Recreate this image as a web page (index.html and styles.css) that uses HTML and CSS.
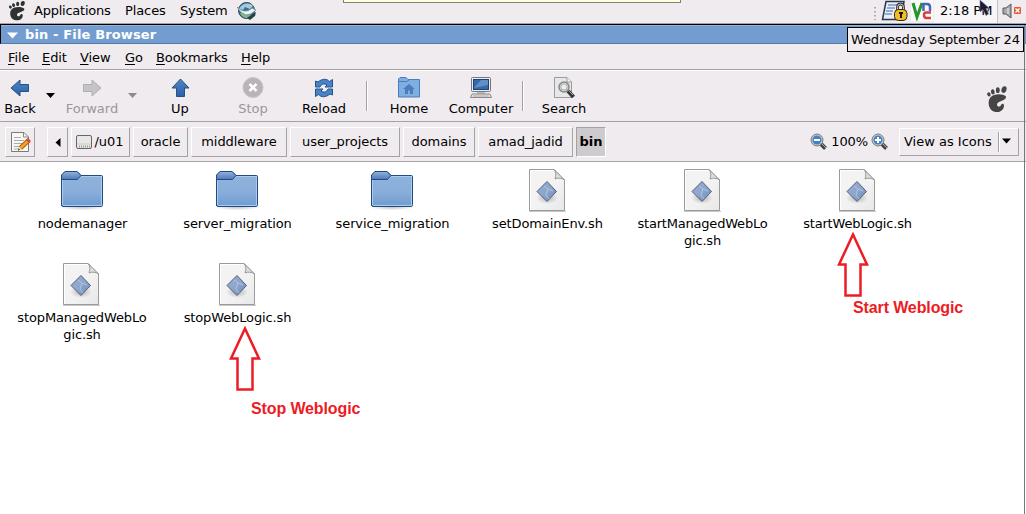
FILE: index.html
```html
<!DOCTYPE html>
<html lang="en">
<head>
<meta charset="utf-8">
<title>bin - File Browser</title>
<link rel="stylesheet" href="styles.css">
</head>
<body>
<svg class="defs" width="0" height="0">
  <defs>
    <linearGradient id="gFolder" x1="0" y1="0" x2="0" y2="1"><stop offset="0" stop-color="#8fb3df"/><stop offset=".55" stop-color="#8bafdb"/><stop offset="1" stop-color="#6d9dd0"/></linearGradient>
    <linearGradient id="gTab" x1="0" y1="0" x2="0" y2="1"><stop offset="0" stop-color="#93b3dd"/><stop offset="1" stop-color="#5078b4"/></linearGradient>
    <linearGradient id="gPage" x1="0" y1="0" x2="1" y2="1"><stop offset="0" stop-color="#f4f4f4"/><stop offset=".6" stop-color="#f3f2f3"/><stop offset="1" stop-color="#e8e7e8"/></linearGradient>
    <linearGradient id="gDiamond" x1="0" y1="0" x2="1" y2="1"><stop offset="0" stop-color="#98acd2"/><stop offset=".5" stop-color="#8fa6cc"/><stop offset="1" stop-color="#6c86b5"/></linearGradient>
    <linearGradient id="gArrow" x1="0" y1="0" x2="0" y2="1"><stop offset="0" stop-color="#5186c5"/><stop offset="1" stop-color="#2861a8"/></linearGradient>
    <radialGradient id="gShadow"><stop offset="0" stop-color="#777" stop-opacity=".5"/><stop offset="1" stop-color="#777" stop-opacity="0"/></radialGradient>
    <symbol id="foot" viewBox="0 0 22 28">
      <ellipse cx="2.9" cy="9.4" rx="1.7" ry="2.1" transform="rotate(-25 2.9 9.4)"/>
      <ellipse cx="6.8" cy="6.8" rx="1.8" ry="2.6" transform="rotate(-12 6.8 6.8)"/>
      <ellipse cx="11.8" cy="5.2" rx="1.9" ry="2.9"/>
      <ellipse cx="18" cy="4.6" rx="2.5" ry="3.4" transform="rotate(18 18 4.6)"/>
      <path d="M20 11.500C17 8.500 8 8 4.300 12.500C1 16.500 2.500 26 9.500 27C14 27.700 18 25 18 20.500C18 18.500 16 18 15 20C14 22.500 11 22 11 19.500C11 15.500 21 16 20 11.500Z"/>
    </symbol>
    <symbol id="folder" viewBox="0 0 46 44">
      <ellipse cx="23" cy="38.500" rx="23" ry="4" fill="url(#gShadow)"/>
      <path d="M2.500 37.500V8L6 3.500H18L22 7.500H42.500Q43.500 7.500 43.500 8.500V36.500Q43.500 38.500 42 38.500H4Q2.500 38.500 2.500 36.500Z" fill="url(#gFolder)" stroke="#204a87"/>
      <path d="M3.500 37V11.500H18L22.500 8.500H42.500V37.500H4" fill="none" stroke="#b0cbea"/>
      <path d="M2.500 11.500V7L6 3.500H18L22 7.500L18.500 11.500Z" fill="url(#gTab)" stroke="#204a87"/>
    </symbol>
    <symbol id="script" viewBox="0 0 38 44">
      <path d="M1 43.300H38" stroke="#bbb"/>
      <path d="M1.500 1.500H26L36.500 12V42.500H1.500Z" fill="url(#gPage)" stroke="#9a9a9a"/>
      <path d="M2.500 41.500V2.500H25" fill="none" stroke="#fff"/>
      <path d="M26 1.500C28 4 28.500 7 27 11C30 9.500 34 10 36.500 12Z" fill="#dedede" stroke="#9a9a9a"/>
      <ellipse cx="19" cy="30" rx="11" ry="6" fill="url(#gShadow)"/>
      <path d="M19 13.500L28.500 23.500L19 33.500L9 23.500Z" fill="url(#gDiamond)" stroke="#51607a"/>
      <path d="M16 18L20 21L18 27L21 31M20 21L25 23" fill="none" stroke="#b0c4e0"/>
    </symbol>
    <symbol id="arrow" viewBox="0 0 20 20"><path d="M1 10L10 2V6.500H18.500V13.500H10V18Z"/></symbol>
    <symbol id="lens" viewBox="0 0 18 18">
      <path d="M11 11L15.500 15.500" stroke="#444" stroke-width="4"/><path d="M12 11L16 15" stroke="#aaa"/>
      <circle cx="7" cy="7" r="6" fill="#c8c9c5" stroke="#7c7d78"/><circle cx="7" cy="7" r="4.500" fill="#4382c9"/>
      <path d="M4 7H10" stroke="#fff" stroke-width="2"/>
    </symbol>
  </defs>
</svg>

<div class="desktop">
  <header class="panel">
    <svg class="panel-foot" width="18" height="21" viewBox="0 0 22 28" preserveAspectRatio="none"><use href="#foot"/></svg>
    <span class="t applications">Applications</span><span class="t places">Places</span><span class="t system">System</span>
    <svg class="globe" width="20" height="20" viewBox="0 0 20 20">
      <circle cx="9.500" cy="9.500" r="8" fill="#456d91" stroke="#26475d"/>
      <path d="M2 8C5 2 12 1 16 5L13 8L8 6L6 9Z" fill="#9fcbdc"/><path d="M3 12L8 10L14 14L10 17Q5 17 3 12" fill="#83b883"/>
      <path d="M0 6C4 10 10 12 15 7L19 9L14 13L9 14Q3 12 0 6" fill="#e9f2f6" stroke="#63808a" stroke-width=".7"/>
      <path d="M10 17L19 11L18 15L13 19Z" fill="#273f4b"/>
    </svg>
    <div class="tray">
      <svg class="grip" width="4" height="18" viewBox="0 0 4 18"><path d="M2 3V16" stroke="#aaa" stroke-width="2" stroke-dasharray="1.500 2.500"/></svg>
      <svg class="lock" width="28" height="22" viewBox="0 0 28 22">
        <path d="M5 1.500H23L20 19.500H1.500Z" fill="#e8eef8" stroke="#29364e" stroke-width="1.500"/>
        <path d="M7 5H17M6 8H14M5 11H12M4 14H11" stroke="#7895c2" stroke-width="1.500"/>
        <path d="M16.500 11V7.500Q16.500 4 19.500 4Q22.500 4 22.500 7.500V11" fill="none" stroke="#333" stroke-width="2.800"/>
        <path d="M16.500 11V7.500Q16.500 4 19.500 4Q22.500 4 22.500 7.500V11" fill="none" stroke="#ccc"/>
        <rect x="13.500" y="9.500" width="12.500" height="11" rx="4" fill="#f0bd27" stroke="#35290a"/>
        <path d="M20 12V18M18 13H22" stroke="#171717" stroke-width="2"/>
      </svg>
      <svg class="vnc" width="22" height="21" viewBox="0 0 22 21">
        <rect width="22" height="21" fill="#faf9f9"/>
        <path d="M2 3L6 17L11 3" fill="none" stroke="#27942e" stroke-width="3"/>
        <path d="M12.500 11V4H16Q19 4 19 7V11" fill="none" stroke="#4267bd" stroke-width="2.500"/>
        <path d="M20 12.500H15Q13 12.500 13 15T15 18H20" fill="none" stroke="#de3b3b" stroke-width="2.500"/>
      </svg>
      <div class="clock t">2:18 PM</div>
      <svg class="speaker" width="24" height="22" viewBox="0 0 24 22">
        <path d="M4 8H7L12 4V18L7 14H4Z" fill="#aaa" stroke="#555"/><path d="M9 8V14" stroke="#eee"/>
        <rect x="15" y="7" width="7" height="7" rx="1" fill="#e35835"/><path d="M16.500 8.500L20.500 12.500M20.500 8.500L16.500 12.500" stroke="#fff" stroke-width="1.300"/>
      </svg>
    </div>
  </header>
  <div class="note"></div>

  <div class="title"><svg width="12" height="7" viewBox="0 0 12 7"><path d="M0 .500H11L5.500 6.500Z" fill="#fff"/></svg><span class="t">bin - File Browser</span></div>

  <nav class="menu">
    <span class="t m-file"><u>F</u>ile</span><span class="t m-edit"><u>E</u>dit</span><span class="t m-view"><u>V</u>iew</span><span class="t m-go"><u>G</u>o</span><span class="t m-book"><u>B</u>ookmarks</span><span class="t"><u>H</u>elp</span>
  </nav>

  <div class="toolbar">
    <div class="tool w-back"><svg width="20" height="20" fill="url(#gArrow)" stroke="#27517f"><use href="#arrow"/></svg><span>Back</span></div>
    <svg class="caret" width="20" height="6" viewBox="0 0 20 6"><path d="M6 0H15L10.500 5Z"/></svg>
    <div class="tool w-forward off"><svg width="20" height="20" viewBox="0 0 20 20" fill="#c6c3c6" stroke="#b2afb2"><path d="M19 10L10 2V6.500H1.500V13.500H10V18Z"/></svg><span>Forward</span></div>
    <svg class="caret" width="20" height="6" viewBox="0 0 20 6"><path d="M6 0H15L10.500 5Z" fill="#8d8a8d"/></svg>
    <div class="tool w-up"><svg width="20" height="20" viewBox="0 0 20 20"><path d="M10.500 1L19 10H14.500V18.500H6.500V10H2Z" fill="url(#gArrow)" stroke="#27517f"/></svg><span>Up</span></div>
    <div class="tool w-stop off"><svg width="22" height="22" viewBox="0 0 22 22"><circle cx="11" cy="10.500" r="10" fill="#b9b4b7" stroke="#c9c4c6"/><path d="M7.500 7L14.500 14M14.500 7L7.500 14" stroke="#fff" stroke-width="2.600"/></svg><span>Stop</span></div>
    <div class="tool w-reload"><svg width="20" height="20" viewBox="0 0 20 20"><g fill="#4a83c4" stroke="#245391"><path d="M1.500 9V3L4 4C8 .500 13 .500 15.500 3.500L18.500 1.500V9H11L13 7C10 5 7 6 6 9Z"/><path d="M18.500 11V17L16 16C12 19.500 7 19.500 4.500 16.500L1.500 18.500V11H9L7 13C10 15 13 14 14 11Z"/></g></svg><span>Reload</span></div>
    <div class="sep"></div>
    <div class="tool w-home"><svg width="24" height="22" viewBox="0 0 24 22"><path d="M1.500 20V2L3 .500H9L11 2.500H22.500V20Z" fill="#81aee0" stroke="#4a7dbd"/><path d="M2 4.500H10L12 3" fill="none" stroke="#4a7dbd"/><path d="M6 12L12 7L18 12H16V17H13V13.500H11V17H8V12Z" fill="#4b7dbd"/></svg><span>Home</span></div>
    <div class="tool w-computer"><svg width="24" height="22" viewBox="0 0 24 22"><rect x="2.500" y=".500" width="19" height="14" rx="1" fill="#eee" stroke="#777"/><rect x="4.500" y="2.500" width="15" height="10" fill="#326aae" stroke="#1c4279"/><path d="M5 11L12 3H19V8Z" fill="#638fc6"/><path d="M8 15H16V17H8Z" fill="#bbb"/><path d="M3 17H21L22.500 20.500H1.500Z" fill="#e5e5e5" stroke="#888"/><path d="M4 19H20" stroke="#aaa"/></svg><span>Computer</span></div>
    <div class="sep"></div>
    <div class="tool w-search"><svg width="24" height="22" viewBox="0 0 24 22"><path d="M2.500 .500H15L19.500 5V20.500H2.500Z" fill="#e7e7e7" stroke="#9c9c9c"/><path d="M15 .500V5H19" fill="#fff" stroke="#999"/><circle cx="12" cy="10" r="5" fill="#ddd" stroke="#888" stroke-width="1.500"/><circle cx="12" cy="10" r="3.200" fill="#ededed" stroke="#aaa"/><path d="M16 14L21.500 20" stroke="#333" stroke-width="4"/><path d="M17 14L21 18" stroke="#aaa"/></svg><span>Search</span></div>
    <svg class="big-foot" width="22" height="28" fill="#454545"><use href="#foot"/></svg>
  </div>

  <div class="pathbar">
    <div class="btn edit"><svg width="22" height="24" viewBox="0 0 22 24"><path d="M2.500 2.500H15L19.500 7V21.500H2.500Z" fill="#f7f7f5" stroke="#7b7b75"/><path d="M14.500 3V7H19" fill="none" stroke="#888"/><path d="M5 7.500H12M5 10.500H15M5 13.500H13M5 16.500H11M5 19H10" stroke="#aaa"/><path d="M11.500 18L20 10" stroke="#a85600" stroke-width="4.500"/><path d="M11.500 18L20 10" stroke="#f9a11f" stroke-width="2.800"/><path d="M18.500 11.500L20.500 9.500" stroke="#d44" stroke-width="4"/><path d="M9 20.500L10 16.500L13 19.500Z" fill="#edcf9b"/><path d="M9 20.500L9.500 18.500L11 20Z" fill="#222"/></svg></div>
    <div class="btn prev"><svg width="6" height="9" viewBox="0 0 6 9"><path d="M5.500 0V9L.500 4.500Z"/></svg></div>
    <div class="btn u01"><svg width="17" height="16" viewBox="0 0 17 16"><rect x=".500" y="1.500" width="15" height="13" rx="1.500" fill="#e8e8e7" stroke="#666"/><path d="M1 10H15" stroke="#ccc"/><path d="M3 12.500H14" stroke="#999" stroke-width="2" stroke-dasharray="1 1"/></svg><span class="t">/u01</span></div>
    <div class="btn oracle"><span class="t">oracle</span></div>
    <div class="btn middleware"><span class="t">middleware</span></div>
    <div class="btn projects"><span class="t">user_projects</span></div>
    <div class="btn domains"><span class="t">domains</span></div>
    <div class="btn amad"><span class="t">amad_jadid</span></div>
    <div class="btn bin"><span class="t">bin</span></div>
    <div class="zoom"><svg width="18" height="18"><use href="#lens"/></svg><span class="t">100%</span><svg width="18" height="18" viewBox="0 0 18 18"><use href="#lens"/><path d="M7 4V10" stroke="#fff" stroke-width="2"/></svg></div>
    <div class="select"><span class="t">View as Icons</span><svg width="20" height="22" viewBox="0 0 20 22"><path d="M.500 1V21" stroke="#a5a2a5"/><path d="M1.500 1V21" stroke="#fff"/><path d="M4 7.500H13L8.500 12.500Z"/></svg></div>
  </div>

  <main class="files">
    <div class="file"><svg width="46" height="44"><use href="#folder"/></svg><span>nodemanager</span></div>
    <div class="file"><svg width="46" height="44"><use href="#folder"/></svg><span>server_migration</span></div>
    <div class="file"><svg width="46" height="44"><use href="#folder"/></svg><span>service_migration</span></div>
    <div class="file"><svg width="38" height="44"><use href="#script"/></svg><span>setDomainEnv.sh</span></div>
    <div class="file"><svg width="38" height="44"><use href="#script"/></svg><span class="tight">startManagedWebLo<br>gic.sh</span></div>
    <div class="file"><svg width="38" height="44"><use href="#script"/></svg><span class="tight">startWebLogic.sh</span></div>
    <div class="file shifted"><svg width="38" height="44"><use href="#script"/></svg><span>stopManagedWebLo<br>gic.sh</span></div>
    <div class="file"><svg width="38" height="44"><use href="#script"/></svg><span>stopWebLogic.sh</span></div>
  </main>

  <svg class="callout-arrow start-arrow" width="34" height="66" viewBox="0 0 34 66"><path d="M17 2.500L31 32.500H24.500V63.500H9.500V32.500H3Z"/></svg>
  <div class="callout start-label">Start Weblogic</div>
  <svg class="callout-arrow stop-arrow" width="34" height="66" viewBox="0 0 34 66"><path d="M17 2.500L31 32.500H24.500V63.500H9.500V32.500H3Z"/></svg>
  <div class="callout stop-label">Stop Weblogic</div>
  <div class="date-tip">Wednesday September 24</div>
  <svg class="cursor" width="12" height="17" viewBox="0 0 12 17"><path d="M1 0V12L4 9.500L7 15.500L9.500 14L7 8.500H10.500Z" fill="#1b1b38" stroke="#777b90" stroke-width=".6"/></svg>
</div>
</body>
</html>
```
FILE: styles.css
```css
* { box-sizing: border-box; }
body { margin: 0; background: #fff; font: 13px/17px "DejaVu Sans", sans-serif; color: #000; }
svg { display: block; flex: none; }
u { text-underline-offset: 2px; text-decoration-thickness: 1px; }
.defs { position: absolute; }
.t { white-space: nowrap; flex: none; }
.desktop { position: relative; width: 1026px; height: 514px; overflow: hidden; background: #fff; display: flex; flex-direction: column; }
.desktop::after { content: ""; position: absolute; left: 1024px; top: 25px; width: 1px; height: 489px; background: #727779; }

.panel { height: 24px; flex: none; background: #efebef; border-bottom: 1px solid #a5a2a5; display: flex; align-items: flex-start; }
.panel .t { padding-top: 2px; }
.panel-foot { margin-left: 8px; fill: #303230; }
.applications { margin-left: 8px; width: 91px; letter-spacing: -.24px; }
.places { width: 55px; letter-spacing: -.1px; }
.system { width: 57px; letter-spacing: -.15px; }
.globe { margin-top: 1px; }
.tray { margin-left: auto; width: 153px; height: 23px; display: flex; }
.grip { margin-top: 4px; }
.lock { margin-left: 4px; }
.vnc { margin-left: 2px; }
.clock { margin-left: 1px; width: 64px; height: 23px; padding-left: 6px; background: #f7f5f7; border-right: 1px solid #c5c2c5; }
.speaker { margin-left: 1px; }
.note { position: absolute; left: 343px; top: 0; width: 338px; height: 3px; background: #ffffd8; border: 1px solid #808080; border-top: 0; }

.title { height: 20px; flex: none; display: flex; align-items: center; background: #739dd0; border-top: 1px solid #000; border-left: 1px solid #000; border-bottom: 1px solid #557ba8; box-shadow: inset 0 1px #92b5df; color: #fff; font-weight: bold; }
.title svg { margin: 2px 11px 0 6px; width: 12px; }
.title .t { margin-left: -5px; padding-top: 1px; letter-spacing: .14px; }

.menu { height: 26px; flex: none; background: #efebef; border-bottom: 1px solid #a5a2a5; display: flex; padding: 5px 0 0 8px; letter-spacing: -.1px; }
.m-file { width: 34px; }
.m-edit { width: 38px; }
.m-view { width: 45px; }
.m-go { width: 31px; }
.m-book { width: 85px; }

.toolbar { height: 52px; flex: none; background: #efebef; border-top: 1px solid #fff; border-bottom: 1px solid #a5a2a5; display: flex; }
.tool { height: 50px; padding-top: 6px; display: flex; flex-direction: column; align-items: center; flex: none; }
.tool svg { height: 22px; }
.tool span { margin-top: 1px; white-space: nowrap; }
.off { color: #9a979a; }
.caret { margin-top: 22px; }
.w-back { width: 40px; }
.w-forward { width: 64px; margin-left: 0; }
.w-forward + .caret { margin-left: -2px; }
.w-up { width: 40px; margin-left: 18px; }
.w-stop { width: 50px; margin-left: 28px; }
.w-reload { width: 50px; margin-left: 21px; }
.sep { width: 2px; height: 30px; margin: 10px 0 0 17px; border-left: 1px solid #a5a2a5; border-right: 1px solid #fff; }
.w-home { width: 50px; margin-left: 16px; }
.w-computer { width: 70px; margin-left: 12px; }
.w-computer + .sep { margin-left: 6px; }
.w-search { width: 50px; margin-left: 15px; }
.big-foot { margin: 14px 18px 0 auto; }

.pathbar { height: 40px; flex: none; background: #efebef; border-bottom: 1px solid #a5a2a5; padding: 5px 7px 0 5px; display: flex; gap: 3px; }
.btn { height: 30px; flex: none; display: flex; justify-content: center; align-items: center; border: 1px solid; border-color: #fff #a5a2a5 #a5a2a5 #fff; letter-spacing: -.06px; }
.btn .t { margin-top: -2px; }
.edit { width: 30px; margin-right: 9px; }
.prev { width: 21px; }
.u01 { width: 59px; gap: 2px; padding-right: 2px; }
.oracle { width: 55px; }
.middleware { width: 96px; }
.projects { width: 110px; }
.domains { width: 72px; }
.amad { width: 95px; }
.bin { width: 30px; background: #cecbce; border-color: #a5a2a5 #fff #fff #a5a2a5; font-weight: bold; }
.zoom { margin-left: auto; height: 30px; display: flex; align-items: center; gap: 3px; padding-right: 7px; }
.zoom .t { margin-top: -2px; letter-spacing: -.1px; }
.select { width: 120px; height: 28px; padding-left: 4px; margin-top: 1px; display: flex; align-items: center; justify-content: space-between; border: 1px solid; border-color: #fff #a5a2a5 #a5a2a5 #fff; }
.select .t { margin-top: -2px; }

.files { flex: 1; padding: 6px 0 0 5px; display: grid; grid-template-columns: repeat(6, 155px); grid-auto-rows: 94px; align-content: start; }
.file { display: flex; flex-direction: column; align-items: center; text-align: center; }
.file svg { margin-right: 2px; }
.file span { margin-top: 3px; white-space: nowrap; letter-spacing: -.12px; }
.file .tight { letter-spacing: -.2px; }
.file.shifted { padding-right: 1px; }

.callout { position: absolute; color: #ed1c24; font: bold 16px/18px "Liberation Sans", sans-serif; letter-spacing: -.12px; white-space: nowrap; }
.callout-arrow { position: absolute; fill: none; stroke: #ed1c24; stroke-width: 2.5; }
.start-arrow { left: 836px; top: 232px; }
.start-label { left: 853px; top: 299px; }
.stop-arrow { left: 228px; top: 326px; }
.stop-label { left: 251px; top: 400px; }
.date-tip { position: absolute; left: 847px; top: 27px; width: 177px; height: 25px; border: 1px solid #000; background: #efebef; padding: 3px 0 0 3px; letter-spacing: -.14px; white-space: nowrap; }
.cursor { position: absolute; left: 979px; top: 0; }
```
